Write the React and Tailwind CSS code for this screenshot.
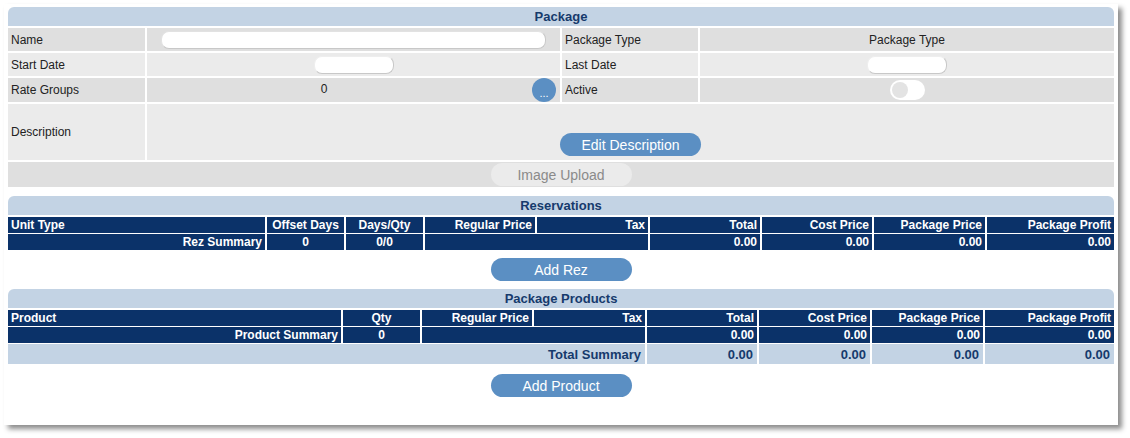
import React from 'react';

const font = { fontFamily: '"Liberation Sans", Arial, sans-serif' };

const SectionHeader = ({ title }) => (
  <div className="h-[19px] bg-[#c3d3e4] rounded-t-[6px] flex items-center justify-center text-[13px] font-bold text-[#163a6c]">
    {title}
  </div>
);

const PillButton = ({ children, disabled, className = '' }) => (
  <button
    className={`h-[23px] w-[141px] rounded-full text-[14px] leading-none ${
      disabled ? 'bg-[#ebebeb] text-[#8a8a8a]' : 'bg-[#5b8fc3] text-white'
    } ${className}`}
  >
    {children}
  </button>
);

const Label = ({ children, className = '' }) => (
  <div className={`flex items-center px-[3px] text-[12px] text-[#222] ${className}`}>{children}</div>
);

const PackageForm = () => (
  <div className="grid grid-cols-[137px_413px_136px_1fr] gap-[2px] mt-[2px]">
    <Label className="h-[23px] bg-[#dfdfdf]">Name</Label>
    <div className="bg-[#dfdfdf] flex items-center justify-center">
      <div className="w-[385px] h-[18px] bg-white rounded-[8px] border border-[#e2e2e2] border-r-[#c8c8c8] border-b-[#c8c8c8]" />
    </div>
    <Label className="bg-[#dfdfdf]">Package Type</Label>
    <div className="bg-[#dfdfdf] flex items-center justify-center text-[12px] text-[#222]">Package Type</div>

    <Label className="h-[23px] bg-[#ebebeb]">Start Date</Label>
    <div className="bg-[#ebebeb] flex items-center justify-center">
      <div className="w-[80px] h-[18px] bg-white rounded-[8px] border border-[#eeeeee] border-r-[#c8c8c8] border-b-[#c8c8c8]" />
    </div>
    <Label className="bg-[#ebebeb]">Last Date</Label>
    <div className="bg-[#ebebeb] flex items-center justify-center">
      <div className="w-[80px] h-[18px] bg-white rounded-[8px] border border-[#eeeeee] border-r-[#c8c8c8] border-b-[#c8c8c8]" />
    </div>

    <Label className="h-[24px] bg-[#dfdfdf]">Rate Groups</Label>
    <div className="bg-[#dfdfdf] flex items-center">
      <span className="flex-1 text-center text-[12px] text-[#222] pr-[31px] -mt-[3px]">0</span>
      <button className="w-[24px] h-[24px] mr-[4px] rounded-full bg-[#5b8fc3] text-white text-[11px] leading-none pt-[6px]">
        ...
      </button>
    </div>
    <Label className="bg-[#dfdfdf]">Active</Label>
    <div className="bg-[#dfdfdf] flex items-center justify-center">
      <div className="w-[35px] h-[20px] rounded-full bg-white flex items-center px-[2px]">
        <div className="w-[16px] h-[16px] rounded-full bg-[#e3e3e3]" />
      </div>
    </div>

    <Label className="h-[56px] bg-[#ebebeb]">Description</Label>
    <div className="col-span-3 bg-[#ebebeb] flex items-end justify-center pb-[4px]">
      <PillButton>Edit Description</PillButton>
    </div>

    <div className="col-span-4 h-[25px] bg-[#dfdfdf] flex items-center justify-center">
      <PillButton disabled>Image Upload</PillButton>
    </div>
  </div>
);

const navyCell = 'bg-[#0b3269] text-white text-[12px] font-bold h-[16px] flex items-center px-[3px] leading-none';
const lightCell = 'bg-[#c3d3e4] text-[#163a6c] text-[13px] font-bold h-[20px] flex items-center justify-end px-[4px] leading-none';

const rezHeaders = [
  ['Unit Type', 'justify-start'],
  ['Offset Days', 'justify-center'],
  ['Days/Qty', 'justify-center'],
  ['Regular Price', 'justify-end'],
  ['Tax', 'justify-end'],
  ['Total', 'justify-end'],
  ['Cost Price', 'justify-end'],
  ['Package Price', 'justify-end'],
  ['Package Profit', 'justify-end'],
];

const productHeaders = [
  ['Product', 'justify-start'],
  ['Qty', 'justify-center'],
  ['Regular Price', 'justify-end'],
  ['Tax', 'justify-end'],
  ['Total', 'justify-end'],
  ['Cost Price', 'justify-end'],
  ['Package Price', 'justify-end'],
  ['Package Profit', 'justify-end'],
];

const totals = ['0.00', '0.00', '0.00', '0.00'];

const Reservations = () => (
  <div className="grid grid-cols-[257px_77px_77px_110px_111px_110px_110px_111px_1fr] gap-x-[2px] gap-y-[1px] mt-[2px]">
    {rezHeaders.map(([h, align]) => (
      <div key={h} className={`${navyCell} ${align}`}>{h}</div>
    ))}
    <div className={`${navyCell} justify-end`}>Rez Summary</div>
    <div className={`${navyCell} justify-center`}>0</div>
    <div className={`${navyCell} justify-center`}>0/0</div>
    <div className={`${navyCell} col-span-2`} />
    {totals.map((t, i) => (
      <div key={i} className={`${navyCell} justify-end`}>{t}</div>
    ))}
  </div>
);

const Products = () => (
  <div className="grid grid-cols-[333px_77px_110px_111px_110px_111px_111px_1fr] gap-x-[2px] gap-y-[1px] mt-[2px]">
    {productHeaders.map(([h, align]) => (
      <div key={h} className={`${navyCell} ${align}`}>{h}</div>
    ))}
    <div className={`${navyCell} justify-end`}>Product Summary</div>
    <div className={`${navyCell} justify-center`}>0</div>
    <div className={`${navyCell} col-span-2`} />
    {totals.map((t, i) => (
      <div key={i} className={`${navyCell} justify-end`}>{t}</div>
    ))}
    <div className={`${lightCell} col-span-4`}>Total Summary</div>
    {totals.map((t, i) => (
      <div key={i} className={lightCell}>{t}</div>
    ))}
  </div>
);

export default function App() {
  return (
    <div className="bg-white w-[1130px] h-[438px] p-[4px]" style={font}>
      <div className="w-[1114px] h-[421px] bg-white px-[4px] pt-[3px] shadow-[4px_4px_5px_rgba(0,0,0,0.45)]">
        <SectionHeader title="Package" />
        <PackageForm />

        <div className="mt-[9px]">
          <SectionHeader title="Reservations" />
          <Reservations />
        </div>
        <div className="flex justify-center mt-[8px]">
          <PillButton>Add Rez</PillButton>
        </div>

        <div className="mt-[8px]">
          <SectionHeader title="Package Products" />
          <Products />
        </div>
        <div className="flex justify-center mt-[10px]">
          <PillButton>Add Product</PillButton>
        </div>
      </div>
    </div>
  );
}
